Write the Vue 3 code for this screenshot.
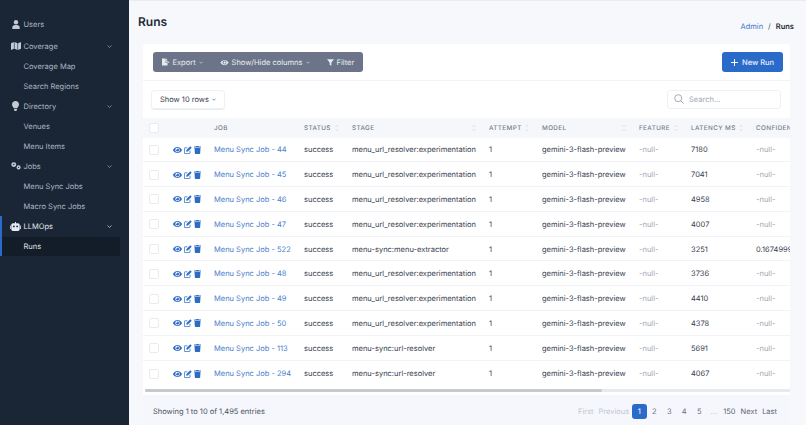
<script setup>
const nav = [
  { label: 'Users', icon: 'user' },
  { label: 'Coverage', icon: 'map', chev: true, gap: true },
  { label: 'Coverage Map', sub: true },
  { label: 'Search Regions', sub: true },
  { label: 'Directory', icon: 'bulb', chev: true },
  { label: 'Venues', sub: true },
  { label: 'Menu Items', sub: true },
  { label: 'Jobs', icon: 'cogs', chev: true },
  { label: 'Menu Sync Jobs', sub: true },
  { label: 'Macro Sync Jobs', sub: true },
]
const cols = [
  { label: 'JOB' },
  { label: 'STATUS', sort: true },
  { label: 'STAGE', sort: true },
  { label: 'ATTEMPT', sort: true },
  { label: 'MODEL', sort: true },
  { label: 'FEATURE', sort: true },
  { label: 'LATENCY MS', sort: true },
  { label: 'CONFIDENCE', sort: true },
]
const U = 'menu_url_resolver:experimentation'
const rows = [
  ['44', U, '7180', '-null-'],
  ['45', U, '7041', '-null-'],
  ['46', U, '4958', '-null-'],
  ['47', U, '4007', '-null-'],
  ['522', 'menu-sync:menu-extractor', '3251', '0.16749993'],
  ['48', U, '3736', '-null-'],
  ['49', U, '4410', '-null-'],
  ['50', U, '4378', '-null-'],
  ['113', 'menu-sync:url-resolver', '5691', '-null-'],
  ['294', 'menu-sync:url-resolver', '4067', '-null-'],
]
const eye = 'M572.52 241.4C518.29 135.59 410.93 64 288 64S57.68 135.64 3.48 241.41a32.35 32.35 0 0 0 0 29.19C57.71 376.41 165.07 448 288 448s230.32-71.64 284.52-177.41a32.35 32.35 0 0 0 0-29.19zM288 400a144 144 0 1 1 144-144 143.93 143.93 0 0 1-144 144zm0-240a95.31 95.31 0 0 0-25.31 3.79 47.85 47.85 0 0 1-66.9 66.9A95.78 95.78 0 1 0 288 160z'
const trash = 'M432 32H312l-9.4-18.7A24 24 0 0 0 281.1 0H166.8a23.72 23.72 0 0 0-21.4 13.3L136 32H16A16 16 0 0 0 0 48v32a16 16 0 0 0 16 16h416a16 16 0 0 0 16-16V48a16 16 0 0 0-16-16zM53.2 467a48 48 0 0 0 47.9 45h245.8a48 48 0 0 0 47.9-45L416 128H32z'
</script>

<template>
  <div class="app">
    <aside class="side">
      <div v-for="n in nav" :key="n.label" class="item" :class="{ sub: n.sub, gap: n.gap }">
        <span v-if="!n.sub" class="ico">
          <svg v-if="n.icon === 'user'" width="8" height="9" viewBox="0 0 8 9"><circle cx="4" cy="2.3" r="2.2" fill="#c3cad4"/><path d="M0.300 9V7.600C0.300 6 1.500 5 3 5h2c1.500 0 2.700 1 2.700 2.600V9z" fill="#c3cad4"/></svg>
          <svg v-else-if="n.icon === 'map'" width="10" height="8" viewBox="0 0 10 8"><path d="M0 1.200 2.900 0v6.800L0 8zM3.500 0l3 1.200V8l-3-1.200zM7.100 1.200 10 0v6.800L7.100 8z" fill="#c3cad4"/></svg>
          <svg v-else-if="n.icon === 'bulb'" width="7" height="10" viewBox="0 0 7 10"><path d="M3.500 0C1.500 0 0 1.500 0 3.400c0 1.500 1.200 2.300 1.700 3.800h3.600C5.800 5.700 7 4.900 7 3.400 7 1.500 5.500 0 3.500 0zM2 8h3v.7L4.300 10H2.700L2 8.700z" fill="#c3cad4"/></svg>
          <svg v-else-if="n.icon === 'cogs'" width="10" height="8" viewBox="0 0 10 8"><circle cx="2.800" cy="2.600" r="1.600" fill="none" stroke="#c3cad4" stroke-width="1.700"/><circle cx="7.600" cy="5.400" r="1.300" fill="none" stroke="#c3cad4" stroke-width="1.500"/></svg>
        </span>
        <span class="lbl">{{ n.label }}</span>
        <svg v-if="n.chev" class="chev" width="5" height="3" viewBox="0 0 5 3"><path d="M.5.500 2.500 2.500 4.500.500" fill="none" stroke="#8a94a3" stroke-width=".8"/></svg>
      </div>
      <div class="open">
        <div class="item llm">
          <span class="ico">
            <svg width="11" height="9" viewBox="0 0 11 9"><path d="M3 1.300h5c1 0 1.700.7 1.700 1.700v4.300C9.700 8.300 9 9 8 9H3c-1 0-1.700-.7-1.700-1.700V3c0-1 .7-1.700 1.700-1.700zM0 3.500h.8v3.500H0zM10.200 3.500h.8v3.500h-.8zM5 0h1v1.300H5z" fill="#e8ebf0"/><circle cx="3.900" cy="4.400" r=".9" fill="#1a2636"/><circle cx="7.100" cy="4.400" r=".9" fill="#1a2636"/></svg>
          </span>
          <span class="lbl">LLMOps</span>
          <svg class="chev" width="5" height="3" viewBox="0 0 5 3"><path d="M.5.500 2.500 2.500 4.500.500" fill="none" stroke="#c4cad3" stroke-width=".8"/></svg>
        </div>
        <div class="item sub cur"><span class="lbl">Runs</span></div>
      </div>
    </aside>

    <main class="main">
      <div class="top">
        <h1>Runs</h1>
        <div class="crumb"><a>Admin</a><i>/</i><b>Runs</b></div>
      </div>
      <section class="card">
        <div class="tools">
          <div class="group">
            <span class="gbtn">
              <svg width="8" height="8" viewBox="0 0 9 8"><path d="M0 0h4v2.200h2.200V3.600H3.200v.9h3V8H0zM4.500 0l1.700 1.800H4.500zM6.500 3.300 9 4.100 6.500 5z" fill="#e8ebef"/></svg>
              <span>Export</span>
              <svg class="gc" width="4" height="3" viewBox="0 0 5 3"><path d="M.5.500 2.500 2.500 4.500.500" fill="none" stroke="#dfe3e8" stroke-width=".8"/></svg>
            </span>
            <span class="gbtn">
              <svg width="9" height="7" viewBox="0 0 576 512"><path :d="eye" fill="#e8ebef"/></svg>
              <span>Show/Hide columns</span>
              <svg class="gc" width="4" height="3" viewBox="0 0 5 3"><path d="M.5.500 2.500 2.500 4.500.500" fill="none" stroke="#dfe3e8" stroke-width=".8"/></svg>
            </span>
            <span class="gbtn">
              <svg width="7" height="7" viewBox="0 0 8 8"><path d="M0 .3h8L5 4v3.700L3 6.500V4z" fill="#e8ebef"/></svg>
              <span>Filter</span>
            </span>
          </div>
          <button class="new"><svg width="7" height="7" viewBox="0 0 7 7"><path d="M3.500 0v7M0 3.500h7" stroke="#fff" stroke-width="1"/></svg>New Run</button>
        </div>
        <div class="filters">
          <div class="select">Show 10 rows <svg width="4" height="3" viewBox="0 0 5 3"><path d="M.5.500 2.500 2.500 4.500.500" fill="none" stroke="#4b5563" stroke-width=".8"/></svg></div>
          <div class="search">
            <svg width="10" height="10" viewBox="0 0 10 10"><circle cx="4.200" cy="4.200" r="3.500" fill="none" stroke="#8b94a3" stroke-width=".8"/><path d="M6.800 6.800 9.600 9.600" stroke="#8b94a3" stroke-width=".8"/></svg>
            <span>Search...</span>
          </div>
        </div>
        <div class="tablewrap">
          <div class="tbl">
            <div class="row head">
              <span class="c0"><span class="box"></span></span>
              <span class="c1"></span>
              <span v-for="c in cols" :key="c.label" class="th">
                {{ c.label }}
                <svg v-if="c.sort" width="4" height="8" viewBox="0 0 4 8"><path d="M.5 3 2 1 3.500 3M.5 5 2 7 3.500 5" fill="none" stroke="#dde1e7" stroke-width=".8"/></svg>
              </span>
            </div>
            <div v-for="r in rows" :key="r[0]" class="row body">
              <span class="c0"><span class="box"></span></span>
              <span class="c1">
                <svg width="9" height="8" viewBox="0 0 576 512"><path :d="eye" fill="#2d6cc4"/></svg>
                <svg width="8" height="8" viewBox="0 0 8 8"><path d="M6 4.700V7a.6.6 0 0 1-.6.6H1a.6.6 0 0 1-.6-.6V2.400A.6.6 0 0 1 1 1.800h2.300" fill="none" stroke="#2d6cc4" stroke-width=".8"/><path d="M6.300.3 7.700 1.700 3.900 5.500 2.300 5.700 2.500 4.100z" fill="#2d6cc4"/></svg>
                <svg width="7" height="8" viewBox="0 0 448 512"><path :d="trash" fill="#2d6cc4"/></svg>
              </span>
              <a class="td job">Menu Sync Job - {{ r[0] }}</a>
              <span class="td">success</span>
              <span class="td">{{ r[1] }}</span>
              <span class="td">1</span>
              <span class="td">gemini-3-flash-preview</span>
              <span class="td null">-null-</span>
              <span class="td">{{ r[2] }}</span>
              <span class="td" :class="{ null: r[3] === '-null-' }">{{ r[3] }}</span>
            </div>
          </div>
        </div>
        <div class="scroll"><div class="thumb"></div></div>
        <div class="foot">
          <span>Showing 1 to 10 of 1,495 entries</span>
          <div class="pages">
            <span class="lnk off">First</span>
            <span class="lnk off">Previous</span>
            <span class="pg on">1</span>
            <span class="pg">2</span>
            <span class="pg">3</span>
            <span class="pg">4</span>
            <span class="pg">5</span>
            <span class="pg dots">...</span>
            <span class="lnk">150</span>
            <span class="lnk">Next</span>
            <span class="lnk">Last</span>
          </div>
        </div>
      </section>
    </main>
  </div>
</template>

<style scoped>
.app {
  display: flex;
  width: 806px;
  height: 425px;
  overflow: hidden;
  font-family: Inter, "Liberation Sans", sans-serif;
  font-size: 7.500px;
  text-rendering: geometricPrecision;
  color: #374151;
  background: #f6f8fb;
}
.side {
  width: 129px;
  flex: none;
  padding-top: 14px;
  background: #1a2636;
  color: #adb5c1;
  box-sizing: border-box;
}
.item {
  display: flex;
  align-items: center;
  height: 20px;
  padding-left: 8px;
}
.gap { margin-top: 2px; }
.ico {
  width: 15.500px;
  display: flex;
  justify-content: center;
  flex: none;
}
.sub { padding-left: 23.500px; }
.chev { margin-left: auto; margin-right: 17px; }
.open {
  border-left: 2px solid #2a6bc9;
  height: 40px;
}
.open .item { padding-left: 6px; }
.open .llm { color: #e3e6eb; height: 21px; }
.open .sub { padding-left: 21.500px; width: 118px; height: 19px; box-sizing: border-box; }
.cur { background: #131c29; color: #dfe3e8; }

.main {
  flex: 1;
  min-width: 0;
  border-top: 1px solid #e9edf2;
  padding: 0 12px 0 14px;
}
.top {
  display: flex;
  justify-content: space-between;
  height: 43px;
}
h1 {
  margin: 13px 0 0 -5px;
  font-size: 12px;
  font-weight: 600;
  line-height: 16px;
  color: #1f2937;
}
.crumb {
  margin-top: 19.500px;
  line-height: 12px;
  color: #4b5563;
}
.crumb a { color: #3f76c8; }
.crumb i { font-style: normal; margin: 0 5px; }
.crumb b { font-weight: 600; color: #1f2937; }
.card {
  width: 647px;
  background: #fff;
  border-radius: 3px 3px 0 0;
  overflow: hidden;
}
.tools {
  display: flex;
  justify-content: space-between;
  align-items: center;
  height: 36px;
  padding: 0 7px 0 10px;
  border-bottom: 1px solid #f1f3f6;
}
.group {
  display: flex;
  align-items: center;
  gap: 17.500px;
  height: 20px;
  width: 210px;
  box-sizing: border-box;
  padding-left: 9px;
  border-radius: 3px;
  background: #6b7488;
  color: #eceef2;
}
.gbtn { display: flex; align-items: center; gap: 2.500px; }
.gc { margin-left: .5px; }
.new {
  display: flex;
  align-items: center;
  gap: 4px;
  width: 61px;
  height: 20px;
  padding: 0 0 0 9px;
  border: 0;
  border-radius: 3px;
  background: #2a6bc9;
  color: #e9f0fb;
  font: 500 7.500px Inter, sans-serif;
  text-rendering: geometricPrecision;
}
.filters {
  display: flex;
  justify-content: space-between;
  align-items: center;
  height: 36.500px;
  padding: 0 9px 0 8px;
}
.select {
  display: flex;
  align-items: center;
  gap: 3px;
  width: 74px;
  height: 19px;
  box-sizing: border-box;
  padding-left: 8px;
  border: 1px solid #eef0f3;
  border-radius: 3px;
  color: #374151;
  box-shadow: 0 1px 1px #e9ecf0;
}
.search {
  display: flex;
  align-items: center;
  gap: 5px;
  width: 114px;
  height: 19px;
  box-sizing: border-box;
  padding-left: 6px;
  border: 1px solid #eef0f3;
  border-radius: 3px;
  color: #a2a9b5;
}
.tablewrap { overflow: hidden; }
.tbl { width: 760px; }
.row {
  display: grid;
  grid-template-columns: 30px 41px 90px 48px 137px 53px 97px 52px 65px 100px;
  align-items: center;
}
.head {
  height: 20px;
  background: #f5f7fa;
  font-size: 6.300px;
  font-weight: 500;
  letter-spacing: .4px;
  color: #737c8c;
}
.th {
  display: flex;
  justify-content: space-between;
  align-items: center;
  white-space: nowrap;
  padding-right: 13px;
}
.th svg { flex: none; }
.body {
  height: 24.800px;
  box-sizing: border-box;
  padding-top: 1px;
  border-bottom: 1px solid #f1f3f6;
}
.body:last-child { border-bottom: 0; }
.c0 { padding-left: 6px; display: flex; }
.box {
  width: 10px;
  height: 10px;
  border: 1px solid #e8ebef;
  border-radius: 2px;
  background: #fff;
  box-sizing: border-box;
}
.c1 { display: flex; align-items: center; gap: 2px; }
.td { white-space: nowrap; color: #374151; }
.job { color: #4a80cc; }
.null { color: #a2a9b5; }
.scroll {
  height: 3px;
  margin: 3.500px 0 0 2px;
  background: #e8eaed;
}
.thumb { width: 457px; height: 3px; background: #c6c9cd; border-radius: 2px; }
.foot {
  display: flex;
  justify-content: space-between;
  align-items: center;
  height: 34px;
  margin-top: 3px;
  padding: 0 10.500px 0 10px;
  background: #f5f7fc;
  color: #4b5563;
}
.pages { display: flex; align-items: center; }
.lnk { padding: 0 2.500px; color: #5f6875; }
.off { color: #c3c8d0; }
.pg {
  width: 15px;
  height: 15px;
  display: flex;
  align-items: center;
  justify-content: center;
  border-radius: 3px;
  color: #6b7280;
}
.on { background: #2a6bc9; color: #fff; }
.dots { color: #c3c8d0; width: 14px; }
</style>
<style>
body { margin: 0; background: #f6f8fb; }
</style>
